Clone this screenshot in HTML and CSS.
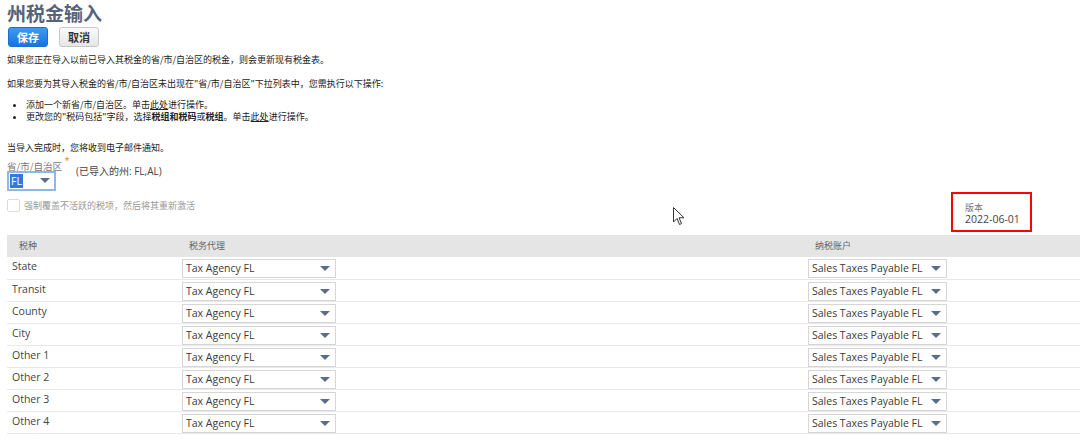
FILE: index.html
```html
<!DOCTYPE html>
<html>
<head>
    <link rel="stylesheet" href="styles.css">
    <title>州税金输入</title>
</head>
<body>
    <div class="page">
        <h1 class="title">州税金输入</h1>
        <div class="buttons">
            <button class="btn btn-save">保存</button>
            <button class="btn btn-cancel">取消</button>
        </div>

        <p class="note first">如果您正在导入以前已导入其税金的省/市/自治区的税金，则会更新现有税金表。</p>
        <p class="note second">如果您要为其导入税金的省/市/自治区未出现在"省/市/自治区"下拉列表中，您需执行以下操作:</p>
        <ul class="steps">
            <li>添加一个新省/市/自治区。单击<u>此处</u>进行操作。</li>
            <li>更改您的"税码包括"字段，选择<b>税组和税码</b>或<b>税组</b>。单击<u>此处</u>进行操作。</li>
        </ul>
        <p class="note third">当导入完成时，您将收到电子邮件通知。</p>

        <div class="field">
            <div class="field-label">省/市/自治区 <span class="req">*</span></div>
            <div class="field-row">
                <div class="select select-state"><span class="sel-text">FL</span><span class="caret"></span></div>
                <span class="imported">(已导入的州: FL,AL)</span>
            </div>
        </div>

        <div class="option-row">
            <label class="check"><span class="box"></span>强制覆盖不活跃的税项，然后将其重新激活</label>
            <div class="version">
                <div class="version-label">版本</div>
                <div class="version-value">2022-06-01</div>
            </div>
        </div>

        <table class="rates">
            <colgroup>
                <col class="w1">
                <col class="w2">
                <col>
            </colgroup>
            <tr class="head">
                <td class="c1">税种</td><td class="c2">税务代理</td><td class="c3">纳税账户</td>
            </tr>
            <tr><td class="c1">State</td><td class="c2"><div class="select agency">Tax Agency FL<span class="caret"></span></div></td><td class="c3"><div class="select account">Sales Taxes Payable FL<span class="caret"></span></div></td></tr>
            <tr><td class="c1">Transit</td><td class="c2"><div class="select agency">Tax Agency FL<span class="caret"></span></div></td><td class="c3"><div class="select account">Sales Taxes Payable FL<span class="caret"></span></div></td></tr>
            <tr><td class="c1">County</td><td class="c2"><div class="select agency">Tax Agency FL<span class="caret"></span></div></td><td class="c3"><div class="select account">Sales Taxes Payable FL<span class="caret"></span></div></td></tr>
            <tr><td class="c1">City</td><td class="c2"><div class="select agency">Tax Agency FL<span class="caret"></span></div></td><td class="c3"><div class="select account">Sales Taxes Payable FL<span class="caret"></span></div></td></tr>
            <tr><td class="c1">Other 1</td><td class="c2"><div class="select agency">Tax Agency FL<span class="caret"></span></div></td><td class="c3"><div class="select account">Sales Taxes Payable FL<span class="caret"></span></div></td></tr>
            <tr><td class="c1">Other 2</td><td class="c2"><div class="select agency">Tax Agency FL<span class="caret"></span></div></td><td class="c3"><div class="select account">Sales Taxes Payable FL<span class="caret"></span></div></td></tr>
            <tr><td class="c1">Other 3</td><td class="c2"><div class="select agency">Tax Agency FL<span class="caret"></span></div></td><td class="c3"><div class="select account">Sales Taxes Payable FL<span class="caret"></span></div></td></tr>
            <tr><td class="c1">Other 4</td><td class="c2"><div class="select agency">Tax Agency FL<span class="caret"></span></div></td><td class="c3"><div class="select account">Sales Taxes Payable FL<span class="caret"></span></div></td></tr>
        </table>
    </div>

    <svg class="cursor" width="12" height="19" viewBox="0 0 12 19">
        <path d="M0.5 0.5 L0.5 15 L4 11.5 L6.5 17.5 L8.5 16.6 L6 10.8 L11 10.8 Z" fill="#fff" stroke="#333" stroke-width="1"/>
    </svg>
</body>
</html>
```

FILE: styles.css
```css
body {
    margin: 0;
    background-color: white;
    font-family: "Open Sans", "Noto Sans CJK SC", sans-serif;
    color: #333;
}
.page {
    padding: 0 0 0 7px;
}
.title {
    margin: 0;
    height: 25px;
    font-size: 19px;
    line-height: 25px;
    font-weight: bold;
    color: #56647a;
    font-family: "Noto Sans CJK SC", sans-serif;
}
.buttons {
    display: flex;
    gap: 11px;
    margin: 2px 0 0 1px;
}
.btn {
    height: 20px;
    width: 40px;
    padding: 0;
    border-radius: 3px;
    font-family: "Noto Sans CJK SC", sans-serif;
    font-size: 11px;
    font-weight: bold;
    line-height: 18px;
}
.btn-save {
    background: linear-gradient(#3d9bf2, #1a73e0);
    border: 1px solid #1a6fd6;
    color: #fff;
}
.btn-cancel {
    background: linear-gradient(#fafafa, #e6e6e6);
    border: 1px solid #c8c8c8;
    color: #333;
}
.note {
    margin: 0;
    font-family: "Noto Sans CJK SC", sans-serif;
    font-size: 9px;
    line-height: 12px;
    color: #222;
}
.note.first {
    margin-top: 7px;
}
.note.second {
    margin-top: 12px;
}
.steps {
    margin: 9px 0 0 0;
    padding-left: 19px;
    font-family: "Noto Sans CJK SC", sans-serif;
    font-size: 9px;
    line-height: 12px;
    color: #222;
}
.note.third {
    margin-top: 19px;
}
.field {
    margin-top: 5px;
}
.field-label {
    font-family: "Noto Sans CJK SC", sans-serif;
    font-size: 9.5px;
    line-height: 12px;
    color: #777;
}
.req {
    color: #e8a33d;
    font-size: 13px;
    position: relative;
    top: -3px;
}
.field-row {
    display: flex;
    align-items: flex-start;
    gap: 20px;
    margin-top: -1px;
}
.imported {
    font-size: 10px;
    line-height: 10px;
    color: #444;
    font-family: "Open Sans", "Noto Sans CJK SC", sans-serif;
    margin-top: -5px;
}
.select {
    position: relative;
    box-sizing: border-box;
    height: 19px;
    border: 1px solid #d6d6d6;
    background: #fff;
    font-size: 10.5px;
    line-height: 17px;
    padding-left: 3px;
    color: #3a3a3a;
}
.caret {
    position: absolute;
    right: 5px;
    top: 6px;
    width: 0;
    height: 0;
    border-left: 5px solid transparent;
    border-right: 5px solid transparent;
    border-top: 5px solid #5a6e8a;
}
.select-state {
    width: 49px;
    height: 20px;
    border: 2px solid #8db9ea;
    padding-left: 1px;
    line-height: 16px;
}
.select-state .sel-text {
    background: #3478d8;
    color: #fff;
    padding: 0 1px;
}
.select-state .caret {
    right: 4px;
    top: 5px;
}
.option-row {
    display: flex;
    justify-content: space-between;
    align-items: flex-start;
    height: 43px;
    margin-top: 1px;
}
.check {
    display: flex;
    align-items: center;
    gap: 4px;
    margin-top: 7px;
    font-family: "Noto Sans CJK SC", sans-serif;
    font-size: 9px;
    color: #999;
}
.box {
    width: 11px;
    height: 11px;
    border: 1px solid #ddd;
    border-radius: 2px;
}
.version {
    box-sizing: border-box;
    width: 81px;
    height: 40px;
    margin-right: 48px;
    border: 2px solid #f00;
    padding: 8px 0 0 12px;
}
.version-label {
    font-family: "Noto Sans CJK SC", sans-serif;
    font-size: 9px;
    line-height: 11px;
    color: #777;
}
.version-value {
    font-size: 10.5px;
    line-height: 13px;
    color: #444;
}
.rates {
    border-collapse: collapse;
    width: 100%;
    table-layout: fixed;
}
.rates .w1 {
    width: 175px;
}
.rates .w2 {
    width: 626px;
}
.rates tr {
    height: 22px;
}
.rates td {
    padding: 0;
    border-bottom: 1px solid #e8e8e8;
    vertical-align: top;
    font-size: 10.5px;
    color: #444;
}
.rates .c1 {
    padding-left: 5px;
    line-height: 18px;
}
.rates .c2, .rates .c3 {
    padding-top: 2px;
}
.rates .head {
    height: 22px;
}
.rates .head td {
    background: #e5e5e5;
    font-family: "Noto Sans CJK SC", sans-serif;
    font-size: 9px;
    line-height: 22px;
    color: #666;
    padding-top: 0;
    border-bottom: none;
}
.rates .head .c1 {
    padding-left: 12px;
}
.rates .head .c2, .rates .head .c3 {
    padding-left: 7px;
}
.agency {
    width: 154px;
}
.account {
    width: 139px;
}
.cursor {
    position: absolute;
    left: 673px;
    top: 207px;
}
```
